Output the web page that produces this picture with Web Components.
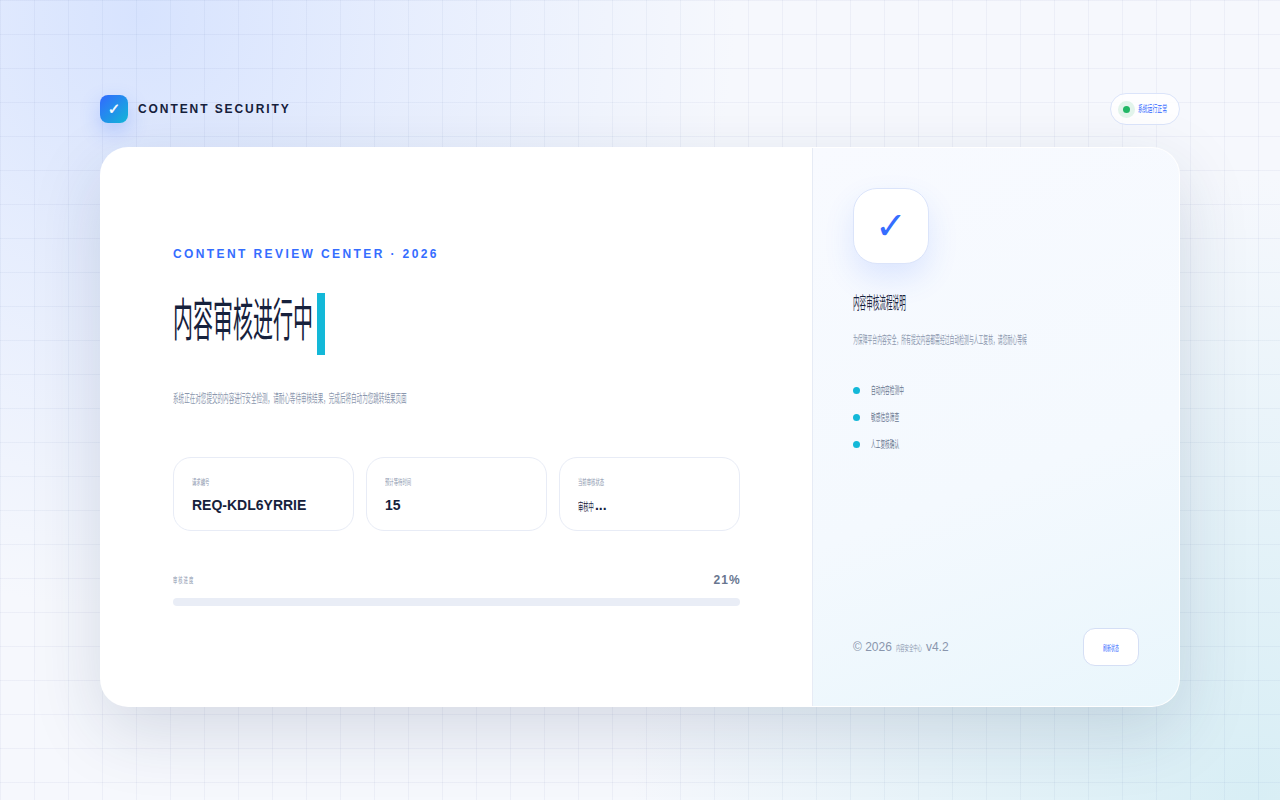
<!DOCTYPE html>
<html lang="zh-CN">
<head>
<meta charset="utf-8">
<title>Content Security</title>
<style>
html, body { margin: 0; height: 100%; }
body {
    font-family: "Liberation Sans", "Noto Sans CJK SC", sans-serif;
    color: #16213c;
    background-color: #f6f8fd;
}
</style>
</head>
<body>
<review-page></review-page>

<script>
// cjk runs are set at the width of the reference's runs, then stretched to its height
const cjk = `
.zh {
    display: inline-block;
    font-family: "Noto Sans CJK SC", sans-serif;
    font-weight: 400;
    letter-spacing: 0;
    line-height: 1;
    white-space: nowrap;
}`;

class ReviewPage extends HTMLElement {
    constructor() {
        super();
        this.attachShadow({ mode: 'open' }).innerHTML = `
<style>
:host {
    display: flex;
    flex-direction: column;
    justify-content: center;
    align-items: center;
    gap: 22px;
    box-sizing: border-box;
    width: 1280px;
    height: 800px;
    overflow: hidden;
    background:
        linear-gradient(rgba(70, 95, 160, .06) 1px, transparent 1px) 0 0 / 34px 34px,
        linear-gradient(90deg, rgba(70, 95, 160, .06) 1px, transparent 1px) 0 0 / 34px 34px,
        radial-gradient(circle at 11% 2%, #d7e3fe 0, rgba(215, 227, 254, .5) 19%, rgba(215, 227, 254, 0) 43%),
        radial-gradient(circle at 98% 100%, #d8eef5 0, rgba(216, 238, 245, .6) 18%, rgba(216, 238, 245, 0) 42%),
        #f6f8fd;
}
</style>
<top-bar></top-bar>
<main-card></main-card>`;
    }
}

class TopBar extends HTMLElement {
    constructor() {
        super();
        this.attachShadow({ mode: 'open' }).innerHTML = `
<style>
${cjk}
:host { display: flex; justify-content: space-between; align-items: center; width: 1080px; height: 32px; }
.brand { display: flex; align-items: center; gap: 10px; }
.logo {
    display: flex; align-items: center; justify-content: center;
    width: 28px; height: 28px; border-radius: 8px;
    background: linear-gradient(135deg, #3268ff, #13b8d8);
    box-shadow: 0 8px 20px rgba(50, 104, 255, .25);
    color: #fff; font: 700 15px "DejaVu Sans", sans-serif;
    -webkit-text-stroke: .4px #fff;
}
.name { font-size: 12px; font-weight: 700; letter-spacing: 1.92px; color: #16213c; }
.pill {
    display: flex; align-items: center; gap: 3px;
    box-sizing: border-box; height: 32px; padding: 0 12px 0 7px;
    border: 1px solid #dbe4fa; border-radius: 16px; background: rgba(255, 255, 255, .85);
}
.dot { width: 7px; height: 7px; margin: 5px; border-radius: 50%; background: #22b866; box-shadow: 0 0 0 5px rgba(34, 184, 102, .12); }
.pill .zh { font-size: 4.85px; color: #3268ff; transform: scaleY(1.9); }
</style>
<div class="brand"><span class="logo">✓</span><span class="name">CONTENT SECURITY</span></div>
<div class="pill"><span class="dot"></span><span class="zh">系统运行正常</span></div>`;
    }
}

class MainCard extends HTMLElement {
    constructor() {
        super();
        this.attachShadow({ mode: 'open' }).innerHTML = `
<style>
:host {
    display: grid;
    grid-template-columns: 711px 1fr;
    box-sizing: border-box;
    width: 1080px;
    height: 560px;
    overflow: hidden;
    border: 1px solid rgba(255, 255, 255, .9);
    border-radius: 28px;
    background: #fff;
    box-shadow: 0 24px 70px rgba(30, 50, 90, .15);
}
</style>
<review-main></review-main>
<review-side></review-side>`;
    }
}

class ReviewMain extends HTMLElement {
    constructor() {
        super();
        this.attachShadow({ mode: 'open' }).innerHTML = `
<style>
${cjk}
:host {
    display: flex; flex-direction: column; justify-content: center;
    box-sizing: border-box; padding: 0 72px 1px;
}
.eyebrow { font-size: 12px; font-weight: 700; letter-spacing: 2.4px; color: #356dff; line-height: 14px; }
h1 { display: flex; align-items: center; height: 62px; margin: 32px 0 0; }
h1 .zh { font-size: 20px; margin-bottom: 12px; color: #16213c; transform: scaleY(2.3); }
.cursor { width: 8px; height: 62px; margin-left: 4px; background: #13b8d8; }
.desc { height: 20px; margin-top: 36px; display: flex; align-items: center; }
.desc .zh { font-size: 5.57px; color: #8a96ad; transform: scaleY(2.15); }
.stats { display: grid; grid-template-columns: repeat(3, 1fr); gap: 12px; margin-top: 46px; }
.progress-head { display: flex; justify-content: space-between; align-items: center; height: 16px; margin-top: 41px; }
.progress-head .zh { font-size: 4.3px; letter-spacing: 1px; color: #8a96ad; transform: scaleY(1.75); }
.pct { font-size: 12px; font-weight: 700; letter-spacing: 1.2px; color: #68768f; margin-right: -1px; }
.track { height: 8px; margin-top: 10px; border-radius: 4px; background: #e9edf6; }
</style>
<div class="eyebrow">CONTENT REVIEW CENTER · 2026</div>
<h1><span class="zh">内容审核进行中</span><span class="cursor"></span></h1>
<div class="desc"><span class="zh">系统正在对您提交的内容进行安全检测，请耐心等待审核结果，完成后将自动为您跳转结果页面</span></div>
<div class="stats">
    <stat-card label="请求编号">REQ-KDL6YRRIE</stat-card>
    <stat-card label="预计等待时间">15</stat-card>
    <stat-card label="当前审核状态"><span class="zh">审核中</span>...</stat-card>
</div>
<div class="progress-head"><span class="zh">审核进度</span><span class="pct">21%</span></div>
<div class="track"></div>`;
    }
}

class StatCard extends HTMLElement {
    constructor() {
        super();
        this.attachShadow({ mode: 'open' }).innerHTML = `
<style>
${cjk}
:host {
    display: block; box-sizing: border-box; height: 74px; padding: 18px;
    border: 1px solid #e8ecf6; border-radius: 18px; background: #fff;
}
.label { height: 12px; display: flex; align-items: center; }
.label .zh { font-size: 4.35px; color: #8a96ad; transform: scaleY(1.75); }
.value { margin-top: 7px; font-size: 14px; font-weight: 700; line-height: 20px; color: #16213c; }
::slotted(.zh) {
    display: inline-block;
    margin-right: 1px;
    font-family: "Noto Sans CJK SC", sans-serif;
    font-size: 5.3px;
    font-weight: 400;
    line-height: 1;
    transform: scaleY(2.05);
}
</style>
<div class="label"><span class="zh">${this.getAttribute('label')}</span></div>
<div class="value"><slot></slot></div>`;
    }
}

class ReviewSide extends HTMLElement {
    constructor() {
        super();
        this.attachShadow({ mode: 'open' }).innerHTML = `
<style>
${cjk}
:host {
    display: flex; flex-direction: column;
    box-sizing: border-box; padding: 40px;
    border-left: 1px solid #e6ebf5;
    background: linear-gradient(160deg, #f8faff 0%, #f4f9fe 58%, #e9f6fc 100%);
}
.badge {
    display: flex; align-items: center; justify-content: center;
    box-sizing: border-box; width: 76px; height: 76px; border-radius: 24px;
    border: 1px solid #dbe4fa; background: #fff;
    box-shadow: 0 14px 30px rgba(50, 104, 255, .13);
    font: 400 38px "DejaVu Sans", sans-serif; color: #356dff;
}
h2 { height: 24px; margin: 26px 0 0; display: flex; align-items: center; }
h2 .zh { font-size: 6.6px; color: #16213c; transform: scaleY(2.5); }
.text { height: 18px; margin-top: 17px; display: flex; align-items: center; }
.text .zh { font-size: 4.83px; color: #8a96ad; transform: scaleY(2.25); }
ul { list-style: none; margin: 33px 0 0; padding: 0; display: flex; flex-direction: column; gap: 11px; }
li { display: flex; align-items: center; gap: 11px; height: 16px; }
li i { width: 7px; height: 7px; border-radius: 50%; background: #13b8d8; }
li .zh { font-size: 4.7px; color: #68768f; transform: scaleY(2.15); }
footer { display: flex; justify-content: space-between; align-items: center; margin-top: auto; }
.copy { display: flex; align-items: center; gap: 4px; font-size: 12px; color: #8a96ad; }
.copy .zh { font-size: 4.35px; transform: scaleY(1.9); }
.btn {
    display: flex; align-items: center; justify-content: center;
    box-sizing: border-box; width: 56px; height: 38px; border-radius: 12px;
    border: 1px solid #d5dff5; background: #fff;
}
.btn .zh { font-size: 4px; color: #356dff; transform: scaleY(2); }
</style>
<div class="badge">✓</div>
<h2><span class="zh">内容审核流程说明</span></h2>
<div class="text"><span class="zh">为保障平台内容安全，所有提交内容都需经过自动检测与人工复核，请您耐心等候</span></div>
<ul>
    <li><i></i><span class="zh">自动内容检测中</span></li>
    <li><i></i><span class="zh">敏感信息筛查</span></li>
    <li><i></i><span class="zh">人工复核确认</span></li>
</ul>
<footer>
    <div class="copy">© 2026 <span class="zh">内容安全中心</span> v4.2</div>
    <div class="btn"><span class="zh">刷新状态</span></div>
</footer>`;
    }
}

customElements.define('review-page', ReviewPage);
customElements.define('top-bar', TopBar);
customElements.define('main-card', MainCard);
customElements.define('review-main', ReviewMain);
customElements.define('stat-card', StatCard);
customElements.define('review-side', ReviewSide);
</script>
</body>
</html>
